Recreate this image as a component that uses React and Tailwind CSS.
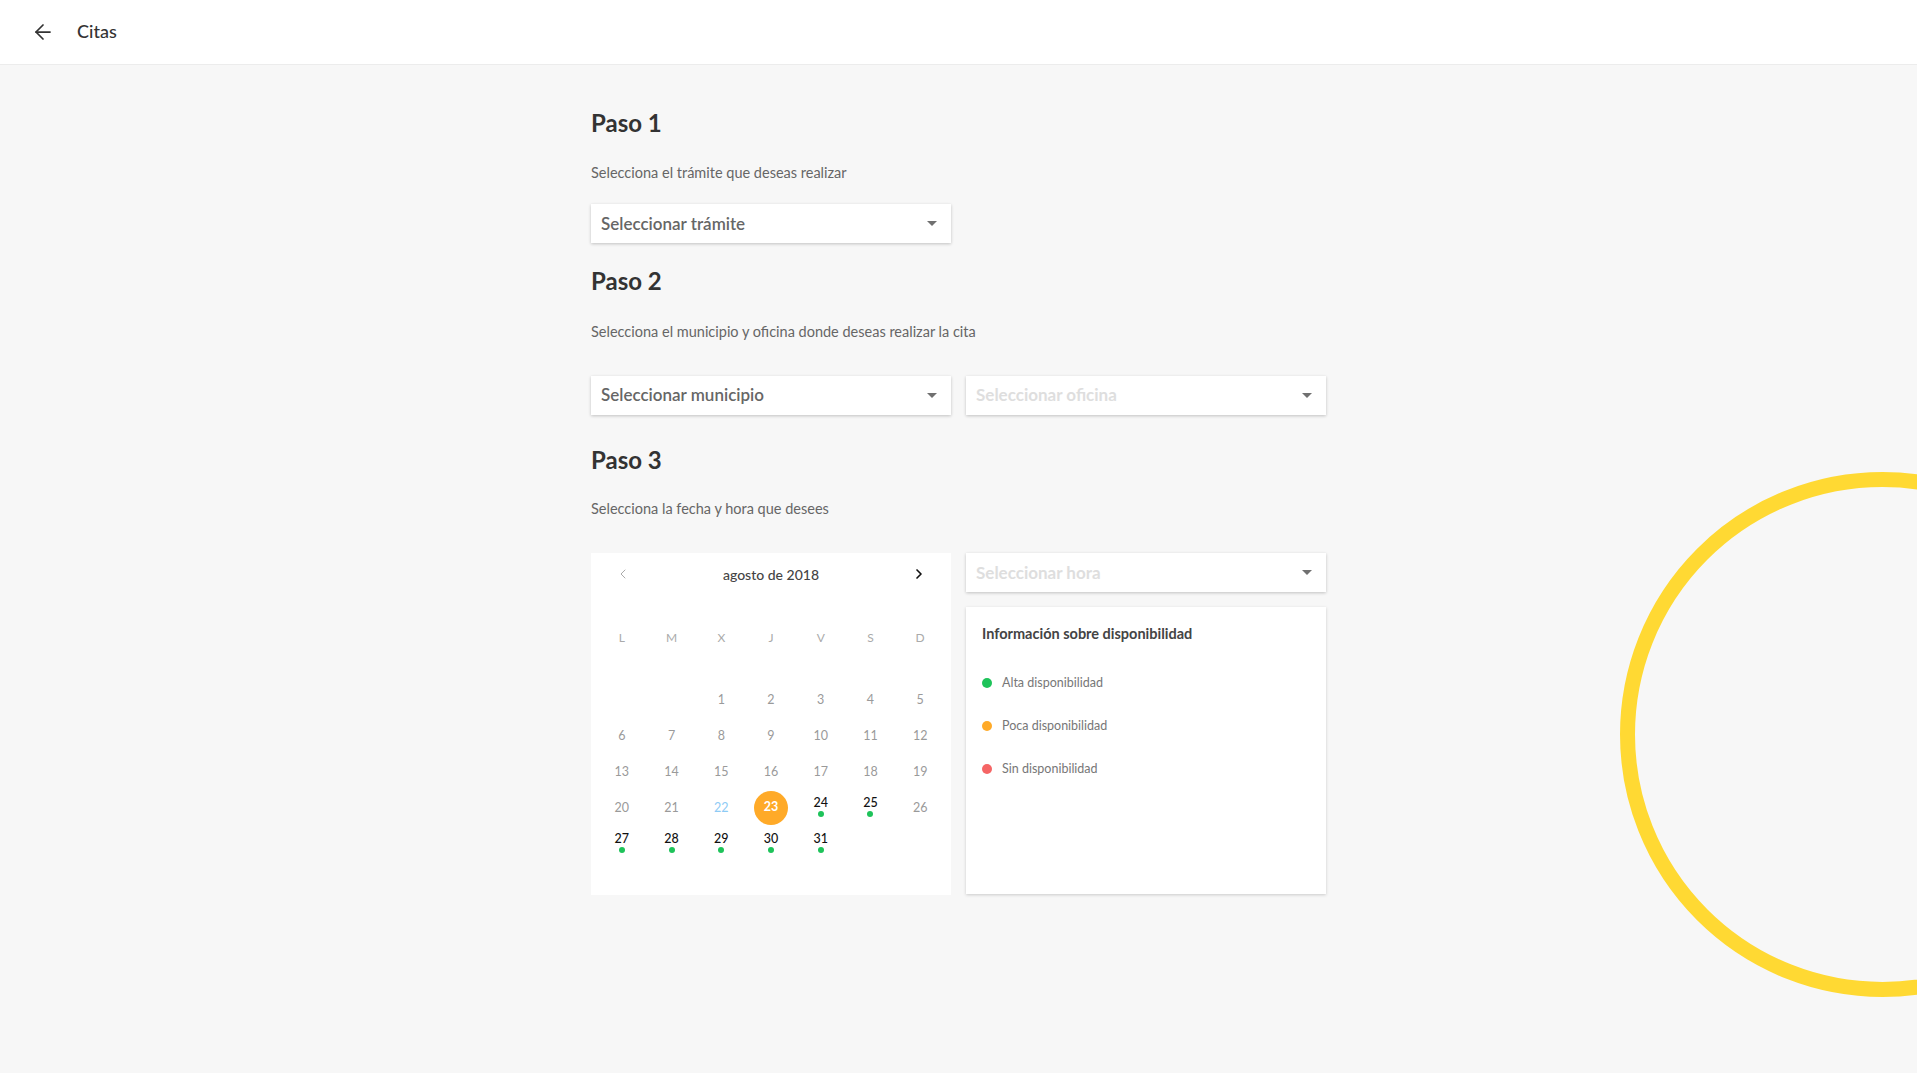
import React from "react";
import { ArrowLeft, ChevronLeft, ChevronRight } from "lucide-react";

const font = { fontFamily: "Lato, 'Open Sans', sans-serif" };

const Select = ({ label, muted }) => (
  <div className="flex items-center justify-between w-[360px] h-[39px] bg-white shadow-[0_1px_3px_rgba(0,0,0,0.22)] pl-[10px] pr-[14px]">
    <span className={`text-[17px] ${muted ? "text-[#dedede] font-bold" : "text-[#666] font-semibold"}`}>{label}</span>
    <span className="w-0 h-0 border-l-[5px] border-r-[5px] border-t-[5px] border-l-transparent border-r-transparent border-t-[#707070]"></span>
  </div>
);

const weeks = [
  [null, null, 1, 2, 3, 4, 5],
  [6, 7, 8, 9, 10, 11, 12],
  [13, 14, 15, 16, 17, 18, 19],
  [20, 21, 22, 23, 24, 25, 26],
  [27, 28, 29, 30, 31, null, null],
];
const available = [24, 25, 27, 28, 29, 30, 31];

const Day = ({ d }) => {
  if (!d) return <div className="h-[36px]"></div>;
  if (d === 23)
    return (
      <div className="h-[36px] flex items-center justify-center">
        <div className="w-[34px] h-[34px] rounded-full bg-[#ffaa28] flex items-start justify-center pt-[7px] text-white text-[12.5px] font-bold">23</div>
      </div>
    );
  if (available.includes(d))
    return (
      <div className="h-[36px] flex flex-col items-center pt-[6px]">
        <span className="text-[12.5px] leading-[14px] text-[#111] font-medium">{d}</span>
        <span className="w-[6px] h-[6px] rounded-full bg-[#1ec35a] mt-[1px]"></span>
      </div>
    );
  return (
    <div className={`h-[36px] flex items-center justify-center text-[12.5px] ${d === 22 ? "text-[#8ecbf5]" : "text-[#9a9a9a]"}`}>{d}</div>
  );
};

const Calendar = () => (
  <div className="w-[360px] h-[342px] bg-white px-[6px]">
    <div className="flex items-center justify-between h-[40px] px-[18px] pt-[2px]">
      <ChevronLeft size={16} strokeWidth={1.5} className="text-[#aaa]" />
      <span className="text-[14px] text-[#444] font-medium">agosto de 2018</span>
      <ChevronRight size={16} strokeWidth={2.5} className="text-[#111]" />
    </div>
    <div className="grid grid-cols-7 mt-[33px] h-[24px] items-center">
      {["L", "M", "X", "J", "V", "S", "D"].map((w) => (
        <div key={w} className="text-center text-[12px] text-[#aaa]">{w}</div>
      ))}
    </div>
    <div className="grid grid-cols-7 mt-[32px]">
      {weeks.flat().map((d, i) => (
        <Day key={i} d={d} />
      ))}
    </div>
  </div>
);

const Legend = ({ color, label }) => (
  <div className="flex items-center gap-[10px]">
    <span className={`w-[10px] h-[10px] rounded-full ${color}`}></span>
    <span className="text-[12.5px] text-[#777]">{label}</span>
  </div>
);

export default function App() {
  return (
    <div className="min-h-[1073px] bg-[#f7f7f7] relative overflow-hidden" style={font}>
      <header className="h-[65px] bg-white border-b border-[#ececec] flex items-center pl-[31px]">
        <ArrowLeft size={24} strokeWidth={1.75} className="text-[#333]" />
        <span className="ml-[22px] text-[18px] text-[#333] font-medium mb-[2px]">Citas</span>
      </header>

      <div className="absolute left-[1620px] top-[472px] w-[525px] h-[525px] rounded-full border-[15px] border-[#ffd933]"></div>

      <main className="relative w-[735px] mx-auto pt-[42px]">
        <h2 className="text-[24px] font-bold text-[#333] leading-[32px]">Paso 1</h2>
        <p className="mt-[23px] text-[14.5px] text-[#666]">Selecciona el trámite que deseas realizar</p>
        <div className="mt-[20px]">
          <Select label="Seleccionar trámite" />
        </div>

        <h2 className="mt-[22px] text-[24px] font-bold text-[#333] leading-[32px]">Paso 2</h2>
        <p className="mt-[24px] text-[14.5px] text-[#666]">Selecciona el municipio y oficina donde deseas realizar la cita</p>
        <div className="mt-[33px] flex gap-[15px]">
          <Select label="Seleccionar municipio" />
          <Select label="Seleccionar oficina" muted />
        </div>

        <h2 className="mt-[29px] text-[24px] font-bold text-[#333] leading-[32px]">Paso 3</h2>
        <p className="mt-[22px] text-[14.5px] text-[#666]">Selecciona la fecha y hora que desees</p>
        <div className="mt-[34px] flex gap-[15px] items-start">
          <Calendar />
          <div className="flex flex-col gap-[15px]">
            <Select label="Seleccionar hora" muted />
            <div className="w-[360px] h-[287px] bg-white shadow-[0_1px_3px_rgba(0,0,0,0.18)] px-[16px] pt-[16px]">
              <h3 className="text-[14.5px] font-bold text-[#444]">Información sobre disponibilidad</h3>
              <div className="mt-[29px] flex flex-col gap-[24px]">
                <Legend color="bg-[#1ec35a]" label="Alta disponibilidad" />
                <Legend color="bg-[#ffaa28]" label="Poca disponibilidad" />
                <Legend color="bg-[#f56565]" label="Sin disponibilidad" />
              </div>
            </div>
          </div>
        </div>
      </main>
    </div>
  );
}
